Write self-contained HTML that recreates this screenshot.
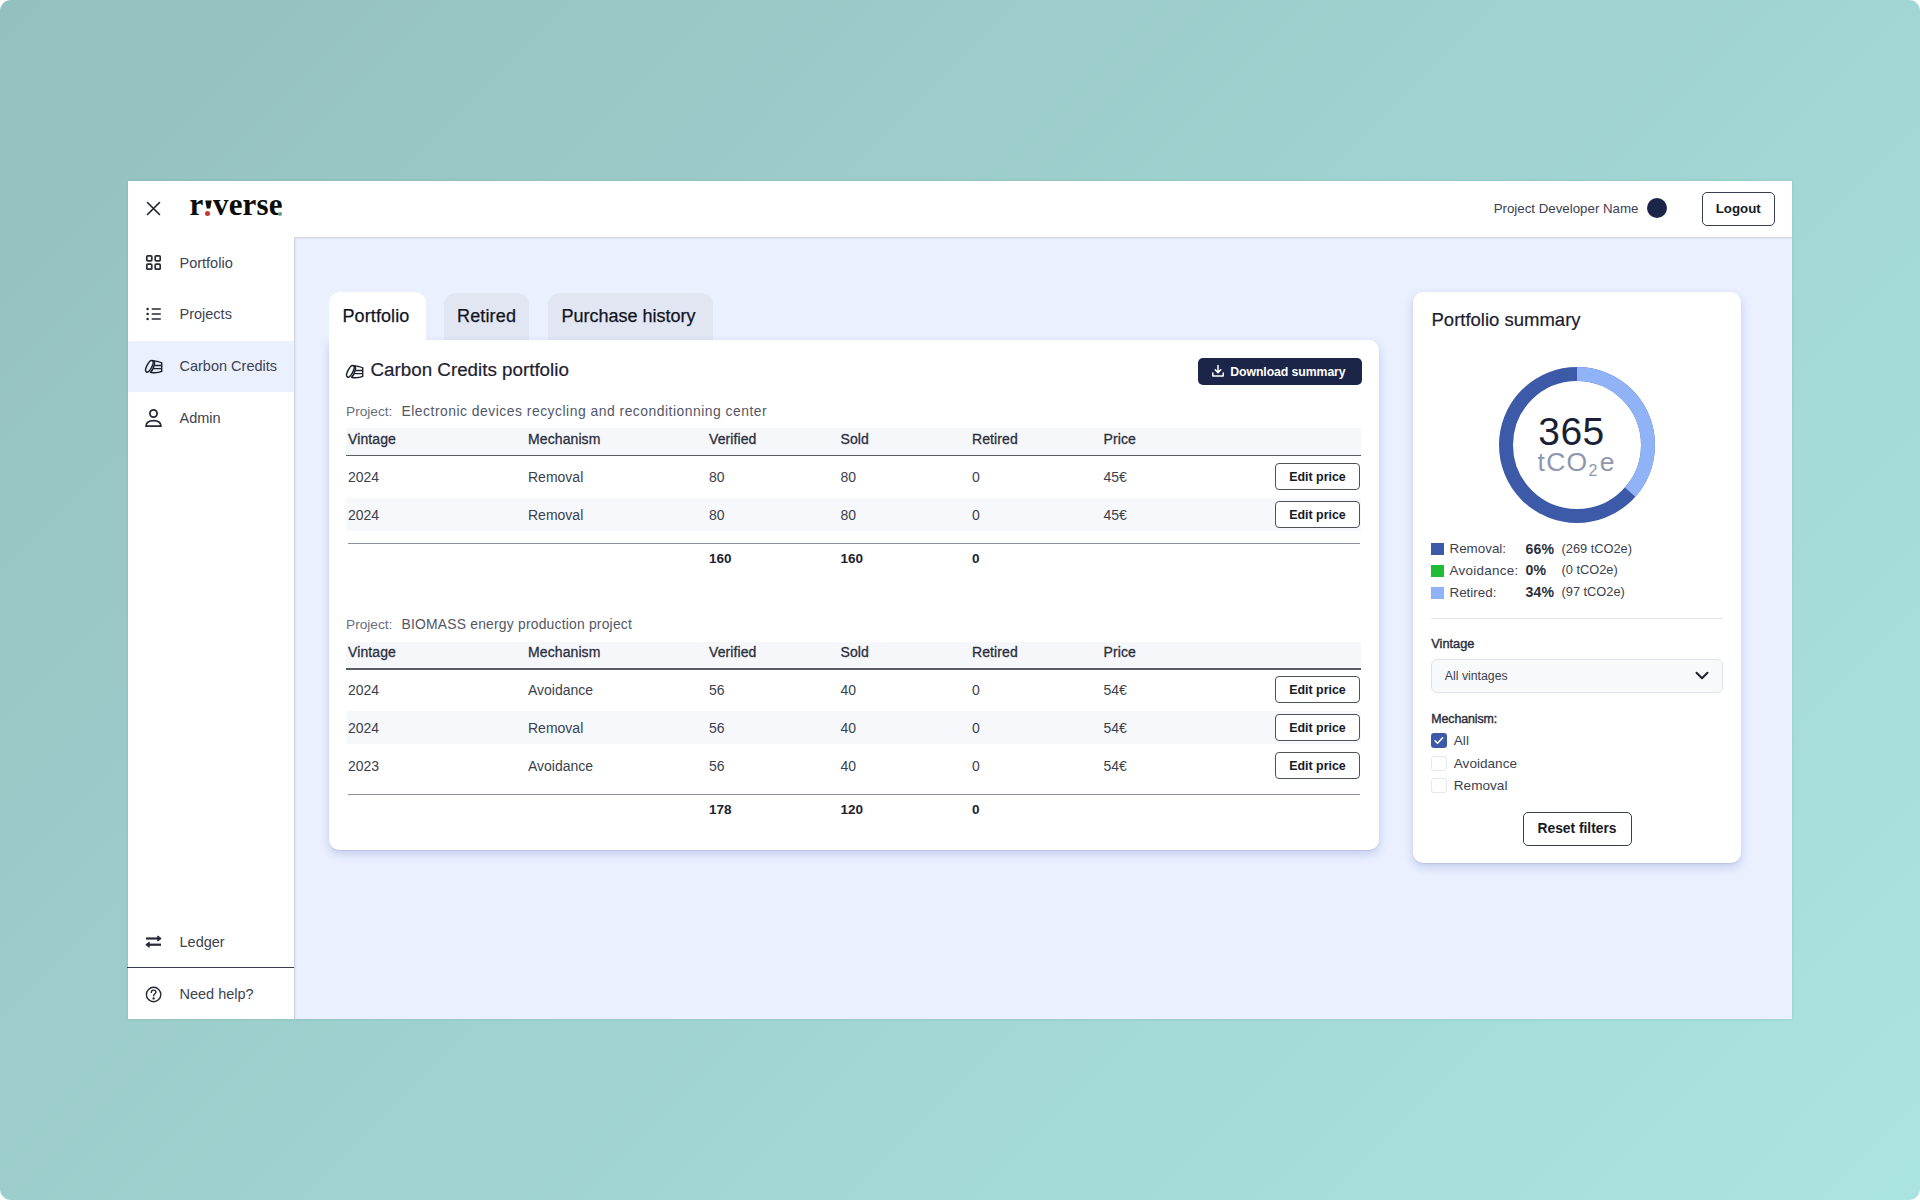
<!DOCTYPE html>
<html><head><meta charset="utf-8"><title>riverse</title>
<style>
html,body{margin:0;padding:0;width:1920px;height:1200px;overflow:hidden;background:#fff;}
body{font-family:"Liberation Sans",sans-serif;}
#bg{position:absolute;left:0;top:0;width:1920px;height:1200px;border-radius:11px;background:linear-gradient(135deg,#94c0bf 0%,#aae4e1 100%);overflow:hidden;}
.r{position:absolute;}
.t{position:absolute;white-space:nowrap;line-height:1;}
.logo{position:absolute;font-family:"Liberation Serif",serif;font-weight:bold;font-size:31px;line-height:1;color:#0c0c0c;letter-spacing:-.3px;}
.li{display:inline-block;position:relative;}
.gd{position:absolute;left:90px;top:24px;width:3.2px;height:3.2px;border-radius:50%;background:#6aa88c;}
.rd{position:absolute;left:13.5px;top:23.5px;width:4.4px;height:4.4px;border-radius:50%;background:#c73a2a;}
</style></head><body><div id="bg">
<div class="r" style="left:127.5px;top:181px;width:1664.5px;height:838px;background:#ffffff;box-shadow:0 0 3px rgba(20,60,60,.14);"></div>
<div class="r" style="left:294px;top:237px;width:1498px;height:782px;background:#eaf0fe;border-top:1px solid #d3d6e4;border-left:1px solid #d1d4e3;box-sizing:border-box;box-shadow:inset 1px 1px 2px rgba(60,70,150,.07);"></div>
<svg class="r" style="left:146px;top:201px" width="15" height="15" viewBox="0 0 15 15"><path d="M1.5 1.5L13.5 13.5M13.5 1.5L1.5 13.5" stroke="#1d2130" stroke-width="1.6" stroke-linecap="round"/></svg>
<div class="logo" style="left:189.5px;top:189px">r</div>
<div class="logo" style="left:213px;top:189px;letter-spacing:.15px">verse</div>
<svg class="r" style="left:204.5px;top:200px" width="7" height="9" viewBox="0 0 7 9"><path d="M0.3 0.6 H6.7 L5.2 8.6 H1.8 Z" fill="#0c0c0c"/></svg>
<div class="r" style="left:205px;top:211px;width:5.199999999999989px;height:5.199999999999989px;background:#c8392b;border-radius:50%;"></div>
<div class="r" style="left:278px;top:212px;width:4px;height:4px;background:#5fa58a;border-radius:50%;"></div>
<div class="t" style="right:281.50px;top:202.04px;font-size:13.3px;color:#3b4052;">Project Developer Name</div>
<div class="r" style="left:1646.5px;top:198px;width:20.0px;height:20px;background:#1b2547;border-radius:50%;"></div>
<div class="r" style="left:1701.5px;top:191.5px;width:73.5px;height:34.0px;border:1px solid #3a3f4f;border-radius:5px;box-sizing:border-box;"></div>
<div class="t" style="left:1738.20px;transform:translateX(-50%);top:202.04px;font-size:13.3px;font-weight:bold;color:#161a26;">Logout</div>
<div class="r" style="left:127.5px;top:340.5px;width:166.5px;height:51.5px;background:#eaf0fe;"></div>
<svg class="r" style="left:145px;top:254px" width="17" height="17" viewBox="0 0 17 17" fill="none" stroke="#262a36" stroke-width="1.7"><rect x="1.8" y="1.8" width="5" height="5" rx="1"/><rect x="10.2" y="1.8" width="5" height="5" rx="1"/><rect x="1.8" y="10.2" width="5" height="5" rx="1"/><rect x="10.2" y="10.2" width="5" height="5" rx="1"/></svg>
<svg class="r" style="left:145px;top:306px" width="17" height="16" viewBox="0 0 17 16" fill="#262a36"><circle cx="2.6" cy="3" r="1.3"/><circle cx="2.6" cy="8" r="1.3"/><circle cx="2.6" cy="13" r="1.3"/><rect x="6.5" y="2.2" width="9.5" height="1.6" rx=".8"/><rect x="6.5" y="7.2" width="9.5" height="1.6" rx=".8"/><rect x="6.5" y="12.2" width="9.5" height="1.6" rx=".8"/></svg>
<svg class="r" style="left:139px;top:355px" width="28" height="22" viewBox="0 0 28 22" fill="none" stroke="#1d2130" stroke-width="1.45" stroke-linecap="round"><ellipse cx="10.4" cy="11.3" rx="2.5" ry="6.4" transform="rotate(27 10.4 11.3)"/><path d="M14.1 5.8 C15.4 6.2 15.9 7.8 15.2 10.2 C14.5 12.9 13 16 11.5 17.2"/><path d="M13.6 5.6 C17 6 20.5 6.6 22.7 7.9 L22.7 16.4 C20.2 17.7 16 18 12 17.6 M16 10.4 H22.4 M15 13.6 H22.4"/></svg>
<svg class="r" style="left:144px;top:408px" width="19" height="20" viewBox="0 0 19 20" fill="none" stroke="#262a36" stroke-width="1.8"><circle cx="9.5" cy="5.5" r="3.6"/><path d="M2 18.2 C2 14 5.5 12.6 9.5 12.6 C13.5 12.6 17 14 17 18.2 Z" stroke-linejoin="round"/></svg>
<svg class="r" style="left:144px;top:933.2px" width="19" height="17" viewBox="0 0 19 17" fill="#262a36" stroke="#262a36"><path d="M2 5.5 H14.5" stroke-width="2.2"/><path d="M13.8 2.9 L17.2 5.5 L13.8 8.1 Z" stroke-width="1" stroke-linejoin="round"/><path d="M17 11.7 H4.5" stroke-width="2.2"/><path d="M5.2 9.1 L1.8 11.7 L5.2 14.3 Z" stroke-width="1" stroke-linejoin="round"/></svg>
<svg class="r" style="left:145px;top:985.5px" width="17" height="17" viewBox="0 0 17 17" fill="none" stroke="#262a36" stroke-width="1.4"><circle cx="8.6" cy="8.5" r="7.2"/><path d="M6.3 6.4 C6.3 4.9 7.4 4.1 8.6 4.1 C9.9 4.1 10.9 4.9 10.9 6.2 C10.9 7.7 8.6 7.9 8.6 9.8" stroke-linecap="round"/><circle cx="8.6" cy="12.4" r=".5" fill="#262a36"/></svg>
<div class="t" style="left:179.50px;top:255.53px;font-size:14.5px;color:#3d4253;">Portfolio</div>
<div class="t" style="left:179.50px;top:307.33px;font-size:14.5px;color:#3d4253;">Projects</div>
<div class="t" style="left:179.50px;top:358.93px;font-size:14.5px;color:#3d4253;">Carbon Credits</div>
<div class="t" style="left:179.50px;top:411.03px;font-size:14.5px;color:#3d4253;">Admin</div>
<div class="t" style="left:179.50px;top:934.73px;font-size:14.5px;color:#3d4253;">Ledger</div>
<div class="t" style="left:179.50px;top:986.93px;font-size:14.5px;color:#3d4253;">Need help?</div>
<div class="r" style="left:127px;top:967px;width:167px;height:1.2000000000000455px;background:#3b3f4d;"></div>
<div class="r" style="left:328.5px;top:291.5px;width:97.5px;height:53.5px;background:#fff;border-radius:12px 12px 0 0;"></div>
<div class="r" style="left:444px;top:292.5px;width:84.5px;height:47.5px;background:#e1e6f2;border-radius:12px 12px 0 0;"></div>
<div class="r" style="left:548px;top:292.5px;width:165px;height:47.5px;background:#e1e6f2;border-radius:12px 12px 0 0;"></div>
<div class="r" style="left:328.5px;top:340px;width:1050.5px;height:510px;background:#fff;border-radius:0 10px 10px 10px;box-shadow:0 1px 1px rgba(40,50,90,.10),0 4px 10px rgba(70,90,190,.24);"></div>
<div class="r" style="left:328.5px;top:291.5px;width:97.5px;height:53.5px;background:#fff;border-radius:12px 12px 0 0;"></div>
<div class="t" style="left:342.50px;top:307.06px;font-size:18px;color:#12151f;letter-spacing:.1px;-webkit-text-stroke:.25px #12151f;">Portfolio</div>
<div class="t" style="left:457.00px;top:307.06px;font-size:18px;color:#12151f;letter-spacing:.15px;-webkit-text-stroke:.25px #12151f;">Retired</div>
<div class="t" style="left:561.50px;top:307.06px;font-size:18px;color:#12151f;-webkit-text-stroke:.25px #12151f;">Purchase history</div>
<svg class="r" style="left:340px;top:360px" width="28" height="22" viewBox="0 0 28 22" fill="none" stroke="#1d2130" stroke-width="1.45" stroke-linecap="round"><ellipse cx="10.4" cy="11.3" rx="2.5" ry="6.4" transform="rotate(27 10.4 11.3)"/><path d="M14.1 5.8 C15.4 6.2 15.9 7.8 15.2 10.2 C14.5 12.9 13 16 11.5 17.2"/><path d="M13.6 5.6 C17 6 20.5 6.6 22.7 7.9 L22.7 16.4 C20.2 17.7 16 18 12 17.6 M16 10.4 H22.4 M15 13.6 H22.4"/></svg>
<div class="t" style="left:370.50px;top:361.49px;font-size:18.8px;color:#1d2130;-webkit-text-stroke:.2px #1d2130;">Carbon Credits portfolio</div>
<div class="r" style="left:1197.5px;top:357.5px;width:164.0px;height:27.5px;background:#1b2547;border-radius:5px;"></div>
<svg class="r" style="left:1211px;top:364px" width="14" height="14" viewBox="0 0 14 14" fill="none" stroke="#fff" stroke-width="1.5" stroke-linecap="round" stroke-linejoin="round"><path d="M7 1.5 V8.5 M4.2 5.8 L7 8.6 L9.8 5.8 M1.8 9 V12 H12.2 V9"/></svg>
<div class="t" style="left:1230.30px;top:365.59px;font-size:12.3px;color:#fff;font-weight:bold;letter-spacing:-.1px;">Download summary</div>
<div class="t" style="left:346.00px;top:405.00px;font-size:13.7px;color:#6b6f7d;">Project:</div>
<div class="t" style="left:401.50px;top:404.83px;font-size:13.9px;color:#535766;letter-spacing:0.5px;">Electronic devices recycling and reconditionning center</div>
<div class="r" style="left:346px;top:428.3px;width:1015px;height:27.0px;background:#f6f7fb;"></div>
<div class="r" style="left:346px;top:455.1px;width:1015px;height:1.3999999999999773px;background:#595c65;"></div>
<div class="t" style="left:348.00px;top:431.65px;font-size:14px;color:#2b2f3c;-webkit-text-stroke:.3px #2b2f3c;letter-spacing:.1px;">Vintage</div>
<div class="t" style="left:528.00px;top:431.65px;font-size:14px;color:#2b2f3c;-webkit-text-stroke:.3px #2b2f3c;letter-spacing:.1px;">Mechanism</div>
<div class="t" style="left:709.00px;top:431.65px;font-size:14px;color:#2b2f3c;-webkit-text-stroke:.3px #2b2f3c;letter-spacing:.1px;">Verified</div>
<div class="t" style="left:840.50px;top:431.65px;font-size:14px;color:#2b2f3c;-webkit-text-stroke:.3px #2b2f3c;letter-spacing:.1px;">Sold</div>
<div class="t" style="left:972.00px;top:431.65px;font-size:14px;color:#2b2f3c;-webkit-text-stroke:.3px #2b2f3c;letter-spacing:.1px;">Retired</div>
<div class="t" style="left:1103.50px;top:431.65px;font-size:14px;color:#2b2f3c;-webkit-text-stroke:.3px #2b2f3c;letter-spacing:.1px;">Price</div>
<div class="t" style="left:348.00px;top:469.75px;font-size:14px;color:#3b3f4c;">2024</div>
<div class="t" style="left:528.00px;top:469.75px;font-size:14px;color:#3b3f4c;">Removal</div>
<div class="t" style="left:709.00px;top:469.75px;font-size:14px;color:#3b3f4c;">80</div>
<div class="t" style="left:840.50px;top:469.75px;font-size:14px;color:#3b3f4c;">80</div>
<div class="t" style="left:972.00px;top:469.75px;font-size:14px;color:#3b3f4c;">0</div>
<div class="t" style="left:1103.50px;top:469.75px;font-size:14px;color:#3b3f4c;">45€</div>
<div class="r" style="left:1275px;top:463.1px;width:85px;height:27.0px;border:1px solid #4d515c;border-radius:4px;box-sizing:border-box;background:#fff;"></div>
<div class="t" style="left:1317.50px;transform:translateX(-50%);top:471.10px;font-size:12.4px;color:#161a26;font-weight:bold;">Edit price</div>
<div class="r" style="left:346px;top:498.1px;width:1015px;height:33.0px;background:#f7f8fb;"></div>
<div class="t" style="left:348.00px;top:507.75px;font-size:14px;color:#3b3f4c;">2024</div>
<div class="t" style="left:528.00px;top:507.75px;font-size:14px;color:#3b3f4c;">Removal</div>
<div class="t" style="left:709.00px;top:507.75px;font-size:14px;color:#3b3f4c;">80</div>
<div class="t" style="left:840.50px;top:507.75px;font-size:14px;color:#3b3f4c;">80</div>
<div class="t" style="left:972.00px;top:507.75px;font-size:14px;color:#3b3f4c;">0</div>
<div class="t" style="left:1103.50px;top:507.75px;font-size:14px;color:#3b3f4c;">45€</div>
<div class="r" style="left:1275px;top:501.1px;width:85px;height:27.0px;border:1px solid #4d515c;border-radius:4px;box-sizing:border-box;background:#fff;"></div>
<div class="t" style="left:1317.50px;transform:translateX(-50%);top:509.10px;font-size:12.4px;color:#161a26;font-weight:bold;">Edit price</div>
<div class="r" style="left:347.5px;top:542.6px;width:1012.5px;height:1.2000000000000455px;background:#8b8f9b;"></div>
<div class="t" style="left:709.00px;top:551.67px;font-size:13.5px;color:#1d2130;font-weight:bold;">160</div>
<div class="t" style="left:840.50px;top:551.67px;font-size:13.5px;color:#1d2130;font-weight:bold;">160</div>
<div class="t" style="left:972.00px;top:551.67px;font-size:13.5px;color:#1d2130;font-weight:bold;">0</div>
<div class="t" style="left:346.00px;top:618.20px;font-size:13.7px;color:#6b6f7d;">Project:</div>
<div class="t" style="left:401.50px;top:618.03px;font-size:13.9px;color:#535766;letter-spacing:0.2px;">BIOMASS energy production project</div>
<div class="r" style="left:346px;top:641.5px;width:1015px;height:27.0px;background:#f6f7fb;"></div>
<div class="r" style="left:346px;top:668.3px;width:1015px;height:1.400000000000091px;background:#595c65;"></div>
<div class="t" style="left:348.00px;top:644.85px;font-size:14px;color:#2b2f3c;-webkit-text-stroke:.3px #2b2f3c;letter-spacing:.1px;">Vintage</div>
<div class="t" style="left:528.00px;top:644.85px;font-size:14px;color:#2b2f3c;-webkit-text-stroke:.3px #2b2f3c;letter-spacing:.1px;">Mechanism</div>
<div class="t" style="left:709.00px;top:644.85px;font-size:14px;color:#2b2f3c;-webkit-text-stroke:.3px #2b2f3c;letter-spacing:.1px;">Verified</div>
<div class="t" style="left:840.50px;top:644.85px;font-size:14px;color:#2b2f3c;-webkit-text-stroke:.3px #2b2f3c;letter-spacing:.1px;">Sold</div>
<div class="t" style="left:972.00px;top:644.85px;font-size:14px;color:#2b2f3c;-webkit-text-stroke:.3px #2b2f3c;letter-spacing:.1px;">Retired</div>
<div class="t" style="left:1103.50px;top:644.85px;font-size:14px;color:#2b2f3c;-webkit-text-stroke:.3px #2b2f3c;letter-spacing:.1px;">Price</div>
<div class="t" style="left:348.00px;top:682.95px;font-size:14px;color:#3b3f4c;">2024</div>
<div class="t" style="left:528.00px;top:682.95px;font-size:14px;color:#3b3f4c;">Avoidance</div>
<div class="t" style="left:709.00px;top:682.95px;font-size:14px;color:#3b3f4c;">56</div>
<div class="t" style="left:840.50px;top:682.95px;font-size:14px;color:#3b3f4c;">40</div>
<div class="t" style="left:972.00px;top:682.95px;font-size:14px;color:#3b3f4c;">0</div>
<div class="t" style="left:1103.50px;top:682.95px;font-size:14px;color:#3b3f4c;">54€</div>
<div class="r" style="left:1275px;top:676.3px;width:85px;height:27.0px;border:1px solid #4d515c;border-radius:4px;box-sizing:border-box;background:#fff;"></div>
<div class="t" style="left:1317.50px;transform:translateX(-50%);top:684.30px;font-size:12.4px;color:#161a26;font-weight:bold;">Edit price</div>
<div class="r" style="left:346px;top:711.3px;width:1015px;height:33.0px;background:#f7f8fb;"></div>
<div class="t" style="left:348.00px;top:720.95px;font-size:14px;color:#3b3f4c;">2024</div>
<div class="t" style="left:528.00px;top:720.95px;font-size:14px;color:#3b3f4c;">Removal</div>
<div class="t" style="left:709.00px;top:720.95px;font-size:14px;color:#3b3f4c;">56</div>
<div class="t" style="left:840.50px;top:720.95px;font-size:14px;color:#3b3f4c;">40</div>
<div class="t" style="left:972.00px;top:720.95px;font-size:14px;color:#3b3f4c;">0</div>
<div class="t" style="left:1103.50px;top:720.95px;font-size:14px;color:#3b3f4c;">54€</div>
<div class="r" style="left:1275px;top:714.3px;width:85px;height:27.0px;border:1px solid #4d515c;border-radius:4px;box-sizing:border-box;background:#fff;"></div>
<div class="t" style="left:1317.50px;transform:translateX(-50%);top:722.30px;font-size:12.4px;color:#161a26;font-weight:bold;">Edit price</div>
<div class="t" style="left:348.00px;top:758.95px;font-size:14px;color:#3b3f4c;">2023</div>
<div class="t" style="left:528.00px;top:758.95px;font-size:14px;color:#3b3f4c;">Avoidance</div>
<div class="t" style="left:709.00px;top:758.95px;font-size:14px;color:#3b3f4c;">56</div>
<div class="t" style="left:840.50px;top:758.95px;font-size:14px;color:#3b3f4c;">40</div>
<div class="t" style="left:972.00px;top:758.95px;font-size:14px;color:#3b3f4c;">0</div>
<div class="t" style="left:1103.50px;top:758.95px;font-size:14px;color:#3b3f4c;">54€</div>
<div class="r" style="left:1275px;top:752.3px;width:85px;height:27.0px;border:1px solid #4d515c;border-radius:4px;box-sizing:border-box;background:#fff;"></div>
<div class="t" style="left:1317.50px;transform:translateX(-50%);top:760.30px;font-size:12.4px;color:#161a26;font-weight:bold;">Edit price</div>
<div class="r" style="left:347.5px;top:793.8px;width:1012.5px;height:1.2000000000000455px;background:#8b8f9b;"></div>
<div class="t" style="left:709.00px;top:802.87px;font-size:13.5px;color:#1d2130;font-weight:bold;">178</div>
<div class="t" style="left:840.50px;top:802.87px;font-size:13.5px;color:#1d2130;font-weight:bold;">120</div>
<div class="t" style="left:972.00px;top:802.87px;font-size:13.5px;color:#1d2130;font-weight:bold;">0</div>
<div class="r" style="left:1413px;top:292px;width:328px;height:571px;background:#fff;border-radius:10px;box-shadow:0 1px 1px rgba(40,50,90,.10),0 4px 10px rgba(70,90,190,.24);"></div>
<div class="t" style="left:1431.50px;top:310.94px;font-size:18.5px;color:#1d2130;-webkit-text-stroke:.2px #1d2130;">Portfolio summary</div>
<svg class="r" style="left:1496.8px;top:364.8px" width="160" height="160" viewBox="0 0 160 160"><circle cx="80" cy="80" r="71" fill="none" stroke="#3c5aa8" stroke-width="14"/><circle cx="80" cy="80" r="71" fill="none" stroke="#90b3f8" stroke-width="14" stroke-dasharray="162.83 446.11" transform="rotate(-90 80 80)"/></svg>
<div class="t" style="left:1571.50px;transform:translateX(-50%);top:411.99px;font-size:39px;color:#1b1f35;letter-spacing:.4px;">365</div>
<div class="t" style="left:1537.5px;top:448.5px;font-size:26.5px;color:#8f97ae;letter-spacing:1.3px">tCO<span style="font-size:16px;position:relative;top:5px;margin:0 1px 0 0">2</span>e</div>
<div class="r" style="left:1431px;top:543.1px;width:12.5px;height:12.0px;background:#3c5aa8;"></div>
<div class="t" style="left:1449.50px;top:542.26px;font-size:13.4px;color:#3b3f4f;">Removal:</div>
<div class="t" style="left:1525.50px;top:541.66px;font-size:14.1px;color:#2b2f3c;font-weight:bold;letter-spacing:.1px;">66%</div>
<div class="t" style="left:1561.50px;top:542.76px;font-size:12.8px;color:#3b3f4f;">(269 tCO2e)</div>
<div class="r" style="left:1431px;top:564.8000000000001px;width:12.5px;height:12.0px;background:#1fbd36;"></div>
<div class="t" style="left:1449.50px;top:563.96px;font-size:13.4px;color:#3b3f4f;letter-spacing:.3px;">Avoidance:</div>
<div class="t" style="left:1525.50px;top:563.36px;font-size:14.1px;color:#2b2f3c;font-weight:bold;letter-spacing:.1px;">0%</div>
<div class="t" style="left:1561.50px;top:564.46px;font-size:12.8px;color:#3b3f4f;">(0 tCO2e)</div>
<div class="r" style="left:1431px;top:586.5px;width:12.5px;height:12.0px;background:#90b3f8;"></div>
<div class="t" style="left:1449.50px;top:585.66px;font-size:13.4px;color:#3b3f4f;">Retired:</div>
<div class="t" style="left:1525.50px;top:585.06px;font-size:14.1px;color:#2b2f3c;font-weight:bold;letter-spacing:.1px;">34%</div>
<div class="t" style="left:1561.50px;top:586.16px;font-size:12.8px;color:#3b3f4f;">(97 tCO2e)</div>
<div class="r" style="left:1431px;top:618px;width:292px;height:1.2999999999999545px;background:#e3e5ea;"></div>
<div class="t" style="left:1431.30px;top:637.86px;font-size:12.8px;color:#2b2f3c;-webkit-text-stroke:.4px #2b2f3c;">Vintage</div>
<div class="r" style="left:1431px;top:659px;width:292px;height:34px;background:#f8f9fb;border:1px solid #dfe2e8;border-radius:6px;box-sizing:border-box;"></div>
<div class="t" style="left:1444.80px;top:670.39px;font-size:12.3px;color:#3b3f4f;">All vintages</div>
<svg class="r" style="left:1694px;top:669px" width="16" height="14" viewBox="0 0 16 14" fill="none" stroke="#1d2130" stroke-width="2" stroke-linecap="round" stroke-linejoin="round"><path d="M2.5 3.8 L8 9.2 L13.5 3.8"/></svg>
<div class="t" style="left:1431.30px;top:712.80px;font-size:12.4px;color:#2b2f3c;-webkit-text-stroke:.4px #2b2f3c;letter-spacing:-.1px;">Mechanism:</div>
<div class="r" style="left:1431px;top:733.3px;width:15.5px;height:15.200000000000045px;background:#3c5aa8;border-radius:3px;"></div>
<svg class="r" style="left:1431px;top:733.3px" width="15.5" height="15.2" viewBox="0 0 15.5 15.2" fill="none" stroke="#fff" stroke-width="1.6" stroke-linecap="round" stroke-linejoin="round"><path d="M4 7.8 L6.6 10.3 L11.6 4.8"/></svg>
<div class="r" style="left:1431px;top:755.8px;width:15.5px;height:15.200000000000045px;background:#fff;border:1px solid #e6e8ec;border-radius:3px;box-sizing:border-box;"></div>
<div class="r" style="left:1431px;top:778.3px;width:15.5px;height:15.200000000000045px;background:#fff;border:1px solid #e6e8ec;border-radius:3px;box-sizing:border-box;"></div>
<div class="t" style="left:1453.80px;top:734.09px;font-size:13.6px;color:#3b3f4f;">All</div>
<div class="t" style="left:1453.80px;top:756.69px;font-size:13.6px;color:#3b3f4f;">Avoidance</div>
<div class="t" style="left:1453.80px;top:779.29px;font-size:13.6px;color:#3b3f4f;">Removal</div>
<div class="r" style="left:1523px;top:811.5px;width:108.5px;height:34.0px;border:1px solid #3a3f4f;border-radius:5px;box-sizing:border-box;"></div>
<div class="t" style="left:1577.00px;transform:translateX(-50%);top:821.82px;font-size:13.8px;color:#161a26;font-weight:bold;">Reset filters</div>
</div></body></html>
